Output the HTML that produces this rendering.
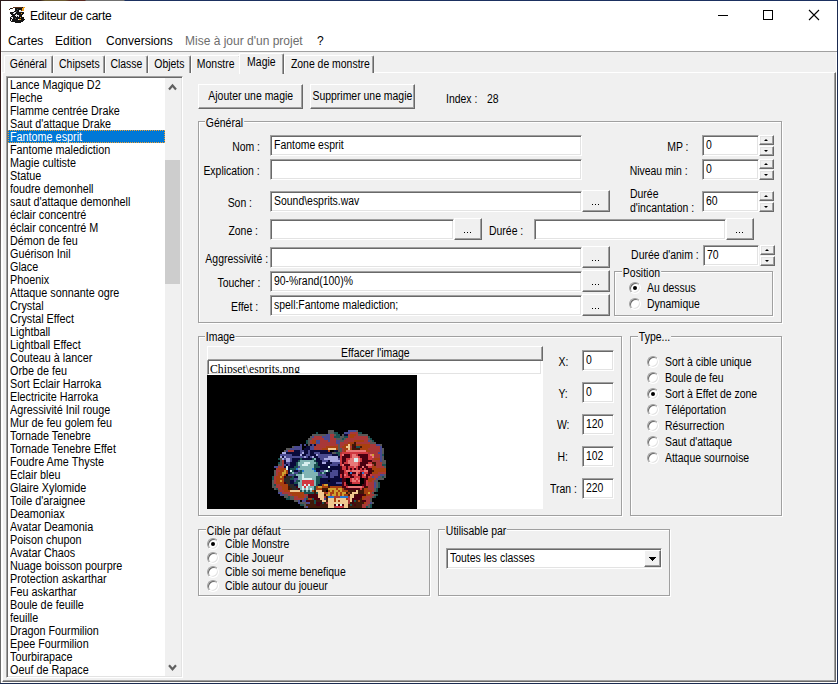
<!DOCTYPE html>
<html><head><meta charset="utf-8">
<style>
*{margin:0;padding:0;box-sizing:border-box}
html,body{width:838px;height:684px;overflow:hidden;background:#f0f0f0}
body{position:relative;font-family:"Liberation Sans",sans-serif;font-size:10.5px;line-height:13px;color:#000}
.a{position:absolute}
.t{position:absolute;white-space:nowrap;line-height:13px;font-size:12px;transform:scaleX(.87);transform-origin:0 0}
.tr{transform-origin:100% 0}
.sx{display:inline-block;font-size:12px;transform:scaleX(.87)}
.sl{display:inline-block;transform:scaleX(.9);transform-origin:0 0}
.r{text-align:right}
.ed{position:absolute;background:#fff;border:1px solid;border-color:#a0a0a0 #fff #fff #a0a0a0;box-shadow:inset 1px 1px #696969,inset -1px -1px #e3e3e3}
.btn{position:absolute;background:#f0f0f0;border:1px solid;border-color:#fff #696969 #696969 #fff;box-shadow:inset -1px -1px #a0a0a0;text-align:center;white-space:nowrap;overflow:hidden;display:flex;justify-content:center}
.grp{position:absolute;border:1px solid #a0a0a0;box-shadow:1px 1px #fff, inset 1px 1px #fff}
.gl{position:absolute;background:#f0f0f0;padding:0 1px;white-space:nowrap;line-height:13px;font-size:12px;transform:scaleX(.87);transform-origin:0 0}
.spin{position:absolute;width:15px;height:10px;background:#f0f0f0;border:1px solid;border-color:#fff #696969 #696969 #fff;box-shadow:inset -1px -1px #a0a0a0,inset 1px 1px #e3e3e3}
.spin:after{content:"";position:absolute;left:4px;border-left:2px solid transparent;border-right:2px solid transparent}
.up:after{top:3px;border-bottom:2px solid #000}
.dn:after{top:3px;border-top:2px solid #000}
.rad{position:absolute;width:12px;height:12px;border-radius:50%;background:#fff;border:1px solid;border-color:#a0a0a0 #fff #fff #a0a0a0;box-shadow:inset 1px 1px #696969,inset -1px -1px #e3e3e3}
.rad.on:after{content:"";position:absolute;left:3px;top:3px;width:4px;height:4px;border-radius:50%;background:#000}
.li{position:absolute;left:8px;width:157px;height:13px;font-size:12px;line-height:15px;padding-left:2px;white-space:nowrap}
.tab{position:absolute;top:55px;height:18px;background:#f0f0f0;border:1px solid;border-bottom:none;border-color:#fff #696969 #696969 #fff;box-shadow:inset -1px 0 #a0a0a0;border-radius:2px 2px 0 0;text-align:center;font-size:12px;line-height:17px;white-space:nowrap}
.tab.sel{top:53px;height:21px;z-index:2;line-height:17px}
.li.sel{background:#0078d7;color:#fff;outline:1px dotted #f0a030;outline-offset:-1px}
.dots i{position:absolute;top:13px;width:1px;height:1px;background:#000}
.dots i:nth-child(1){left:9px}.dots i:nth-child(2){left:12px}.dots i:nth-child(3){left:15px}
</style></head><body>

<!-- title bar -->
<div class="a" style="left:0;top:0;width:838px;height:51px;background:#fff"></div>
<div class="a" style="left:0;top:51px;width:837px;height:1px;background:#a0a0a0"></div>
<svg class="a" style="left:9px;top:7px" width="16" height="16" viewBox="0 0 16 16" shape-rendering="crispEdges"><rect x="4" y="0" width="1" height="1" fill="#5a3018"/><rect x="5" y="0" width="1" height="1" fill="#5a3018"/><rect x="6" y="0" width="1" height="1" fill="#5a3018"/><rect x="7" y="0" width="1" height="1" fill="#5a3018"/><rect x="8" y="0" width="1" height="1" fill="#5a3018"/><rect x="9" y="0" width="1" height="1" fill="#5a3018"/><rect x="10" y="0" width="1" height="1" fill="#5a3018"/><rect x="11" y="0" width="1" height="1" fill="#5a3018"/><rect x="12" y="0" width="1" height="1" fill="#5a3018"/><rect x="13" y="0" width="1" height="1" fill="#141414"/><rect x="14" y="0" width="1" height="1" fill="#f0a020"/><rect x="15" y="0" width="1" height="1" fill="#f0a020"/><rect x="1" y="1" width="1" height="1" fill="#141414"/><rect x="2" y="1" width="1" height="1" fill="#141414"/><rect x="3" y="1" width="1" height="1" fill="#5a3018"/><rect x="6" y="1" width="1" height="1" fill="#141414"/><rect x="7" y="1" width="1" height="1" fill="#141414"/><rect x="8" y="1" width="1" height="1" fill="#141414"/><rect x="9" y="1" width="1" height="1" fill="#141414"/><rect x="10" y="1" width="1" height="1" fill="#141414"/><rect x="11" y="1" width="1" height="1" fill="#141414"/><rect x="12" y="1" width="1" height="1" fill="#141414"/><rect x="13" y="1" width="1" height="1" fill="#f0a020"/><rect x="14" y="1" width="1" height="1" fill="#f0a020"/><rect x="0" y="2" width="1" height="1" fill="#5a3018"/><rect x="6" y="2" width="1" height="1" fill="#141414"/><rect x="7" y="2" width="1" height="1" fill="#141414"/><rect x="8" y="2" width="1" height="1" fill="#50585a"/><rect x="9" y="2" width="1" height="1" fill="#141414"/><rect x="10" y="2" width="1" height="1" fill="#141414"/><rect x="11" y="2" width="1" height="1" fill="#141414"/><rect x="12" y="2" width="1" height="1" fill="#141414"/><rect x="13" y="2" width="1" height="1" fill="#f0a020"/><rect x="14" y="2" width="1" height="1" fill="#f0a020"/><rect x="6" y="3" width="1" height="1" fill="#141414"/><rect x="7" y="3" width="1" height="1" fill="#141414"/><rect x="8" y="3" width="1" height="1" fill="#141414"/><rect x="9" y="3" width="1" height="1" fill="#141414"/><rect x="10" y="3" width="1" height="1" fill="#e8e8e8"/><rect x="11" y="3" width="1" height="1" fill="#e8e8e8"/><rect x="12" y="3" width="1" height="1" fill="#5a3018"/><rect x="13" y="3" width="1" height="1" fill="#f0a020"/><rect x="14" y="3" width="1" height="1" fill="#f0a020"/><rect x="5" y="4" width="1" height="1" fill="#141414"/><rect x="6" y="4" width="1" height="1" fill="#141414"/><rect x="7" y="4" width="1" height="1" fill="#50585a"/><rect x="8" y="4" width="1" height="1" fill="#141414"/><rect x="9" y="4" width="1" height="1" fill="#141414"/><rect x="10" y="4" width="1" height="1" fill="#e8e8e8"/><rect x="11" y="4" width="1" height="1" fill="#e8e8e8"/><rect x="12" y="4" width="1" height="1" fill="#e8e8e8"/><rect x="1" y="5" width="1" height="1" fill="#141414"/><rect x="2" y="5" width="1" height="1" fill="#141414"/><rect x="3" y="5" width="1" height="1" fill="#141414"/><rect x="4" y="5" width="1" height="1" fill="#141414"/><rect x="5" y="5" width="1" height="1" fill="#e8e8e8"/><rect x="6" y="5" width="1" height="1" fill="#e8e8e8"/><rect x="7" y="5" width="1" height="1" fill="#141414"/><rect x="8" y="5" width="1" height="1" fill="#141414"/><rect x="9" y="5" width="1" height="1" fill="#141414"/><rect x="10" y="5" width="1" height="1" fill="#141414"/><rect x="11" y="5" width="1" height="1" fill="#141414"/><rect x="12" y="5" width="1" height="1" fill="#141414"/><rect x="13" y="5" width="1" height="1" fill="#141414"/><rect x="14" y="5" width="1" height="1" fill="#141414"/><rect x="1" y="6" width="1" height="1" fill="#141414"/><rect x="2" y="6" width="1" height="1" fill="#141414"/><rect x="3" y="6" width="1" height="1" fill="#141414"/><rect x="4" y="6" width="1" height="1" fill="#e8e8e8"/><rect x="5" y="6" width="1" height="1" fill="#e8e8e8"/><rect x="6" y="6" width="1" height="1" fill="#141414"/><rect x="7" y="6" width="1" height="1" fill="#141414"/><rect x="8" y="6" width="1" height="1" fill="#141414"/><rect x="9" y="6" width="1" height="1" fill="#141414"/><rect x="10" y="6" width="1" height="1" fill="#141414"/><rect x="11" y="6" width="1" height="1" fill="#141414"/><rect x="12" y="6" width="1" height="1" fill="#f0a020"/><rect x="13" y="6" width="1" height="1" fill="#141414"/><rect x="14" y="6" width="1" height="1" fill="#141414"/><rect x="2" y="7" width="1" height="1" fill="#141414"/><rect x="3" y="7" width="1" height="1" fill="#141414"/><rect x="4" y="7" width="1" height="1" fill="#141414"/><rect x="5" y="7" width="1" height="1" fill="#141414"/><rect x="6" y="7" width="1" height="1" fill="#141414"/><rect x="7" y="7" width="1" height="1" fill="#e8e8e8"/><rect x="8" y="7" width="1" height="1" fill="#141414"/><rect x="9" y="7" width="1" height="1" fill="#141414"/><rect x="10" y="7" width="1" height="1" fill="#141414"/><rect x="11" y="7" width="1" height="1" fill="#141414"/><rect x="12" y="7" width="1" height="1" fill="#141414"/><rect x="13" y="7" width="1" height="1" fill="#141414"/><rect x="3" y="8" width="1" height="1" fill="#141414"/><rect x="4" y="8" width="1" height="1" fill="#141414"/><rect x="5" y="8" width="1" height="1" fill="#141414"/><rect x="6" y="8" width="1" height="1" fill="#e8e8e8"/><rect x="7" y="8" width="1" height="1" fill="#e8e8e8"/><rect x="8" y="8" width="1" height="1" fill="#e8e8e8"/><rect x="9" y="8" width="1" height="1" fill="#e8e8e8"/><rect x="10" y="8" width="1" height="1" fill="#141414"/><rect x="11" y="8" width="1" height="1" fill="#141414"/><rect x="12" y="8" width="1" height="1" fill="#141414"/><rect x="2" y="9" width="1" height="1" fill="#141414"/><rect x="3" y="9" width="1" height="1" fill="#141414"/><rect x="4" y="9" width="1" height="1" fill="#141414"/><rect x="5" y="9" width="1" height="1" fill="#141414"/><rect x="6" y="9" width="1" height="1" fill="#141414"/><rect x="7" y="9" width="1" height="1" fill="#e8e8e8"/><rect x="8" y="9" width="1" height="1" fill="#141414"/><rect x="9" y="9" width="1" height="1" fill="#e8e8e8"/><rect x="10" y="9" width="1" height="1" fill="#141414"/><rect x="11" y="9" width="1" height="1" fill="#141414"/><rect x="12" y="9" width="1" height="1" fill="#141414"/><rect x="1" y="10" width="1" height="1" fill="#141414"/><rect x="2" y="10" width="1" height="1" fill="#e8e8e8"/><rect x="3" y="10" width="1" height="1" fill="#e8e8e8"/><rect x="4" y="10" width="1" height="1" fill="#141414"/><rect x="5" y="10" width="1" height="1" fill="#141414"/><rect x="6" y="10" width="1" height="1" fill="#141414"/><rect x="7" y="10" width="1" height="1" fill="#141414"/><rect x="8" y="10" width="1" height="1" fill="#141414"/><rect x="9" y="10" width="1" height="1" fill="#141414"/><rect x="10" y="10" width="1" height="1" fill="#141414"/><rect x="11" y="10" width="1" height="1" fill="#f0a020"/><rect x="12" y="10" width="1" height="1" fill="#141414"/><rect x="13" y="10" width="1" height="1" fill="#141414"/><rect x="14" y="10" width="1" height="1" fill="#141414"/><rect x="1" y="11" width="1" height="1" fill="#141414"/><rect x="2" y="11" width="1" height="1" fill="#141414"/><rect x="3" y="11" width="1" height="1" fill="#e8e8e8"/><rect x="4" y="11" width="1" height="1" fill="#141414"/><rect x="5" y="11" width="1" height="1" fill="#141414"/><rect x="6" y="11" width="1" height="1" fill="#50585a"/><rect x="7" y="11" width="1" height="1" fill="#141414"/><rect x="8" y="11" width="1" height="1" fill="#141414"/><rect x="9" y="11" width="1" height="1" fill="#141414"/><rect x="10" y="11" width="1" height="1" fill="#141414"/><rect x="11" y="11" width="1" height="1" fill="#141414"/><rect x="12" y="11" width="1" height="1" fill="#141414"/><rect x="13" y="11" width="1" height="1" fill="#141414"/><rect x="14" y="11" width="1" height="1" fill="#141414"/><rect x="1" y="12" width="1" height="1" fill="#141414"/><rect x="2" y="12" width="1" height="1" fill="#e8e8e8"/><rect x="3" y="12" width="1" height="1" fill="#141414"/><rect x="4" y="12" width="1" height="1" fill="#141414"/><rect x="5" y="12" width="1" height="1" fill="#141414"/><rect x="6" y="12" width="1" height="1" fill="#141414"/><rect x="7" y="12" width="1" height="1" fill="#141414"/><rect x="8" y="12" width="1" height="1" fill="#141414"/><rect x="9" y="12" width="1" height="1" fill="#e8e8e8"/><rect x="10" y="12" width="1" height="1" fill="#f0a020"/><rect x="11" y="12" width="1" height="1" fill="#f0a020"/><rect x="12" y="12" width="1" height="1" fill="#141414"/><rect x="13" y="12" width="1" height="1" fill="#141414"/><rect x="14" y="12" width="1" height="1" fill="#141414"/><rect x="15" y="12" width="1" height="1" fill="#141414"/><rect x="1" y="13" width="1" height="1" fill="#141414"/><rect x="2" y="13" width="1" height="1" fill="#e8e8e8"/><rect x="3" y="13" width="1" height="1" fill="#141414"/><rect x="4" y="13" width="1" height="1" fill="#141414"/><rect x="5" y="13" width="1" height="1" fill="#141414"/><rect x="6" y="13" width="1" height="1" fill="#141414"/><rect x="7" y="13" width="1" height="1" fill="#141414"/><rect x="8" y="13" width="1" height="1" fill="#141414"/><rect x="9" y="13" width="1" height="1" fill="#141414"/><rect x="10" y="13" width="1" height="1" fill="#141414"/><rect x="11" y="13" width="1" height="1" fill="#141414"/><rect x="12" y="13" width="1" height="1" fill="#141414"/><rect x="13" y="13" width="1" height="1" fill="#141414"/><rect x="14" y="13" width="1" height="1" fill="#141414"/><rect x="2" y="14" width="1" height="1" fill="#141414"/><rect x="3" y="14" width="1" height="1" fill="#141414"/><rect x="4" y="14" width="1" height="1" fill="#141414"/><rect x="5" y="14" width="1" height="1" fill="#141414"/><rect x="6" y="14" width="1" height="1" fill="#141414"/><rect x="7" y="14" width="1" height="1" fill="#141414"/><rect x="8" y="14" width="1" height="1" fill="#141414"/><rect x="9" y="14" width="1" height="1" fill="#141414"/><rect x="10" y="14" width="1" height="1" fill="#141414"/><rect x="11" y="14" width="1" height="1" fill="#141414"/><rect x="12" y="14" width="1" height="1" fill="#141414"/><rect x="13" y="14" width="1" height="1" fill="#141414"/><rect x="6" y="15" width="1" height="1" fill="#141414"/><rect x="7" y="15" width="1" height="1" fill="#141414"/><rect x="8" y="15" width="1" height="1" fill="#141414"/><rect x="9" y="15" width="1" height="1" fill="#141414"/><rect x="10" y="15" width="1" height="1" fill="#141414"/><rect x="11" y="15" width="1" height="1" fill="#141414"/></svg>
<div class="t" style="transform:none;left:30px;top:6px;font-size:12px;line-height:20px;letter-spacing:-0.2px;color:#000">Editeur de carte</div>
<div class="a" style="left:718px;top:15px;width:10px;height:1px;background:#000"></div>
<div class="a" style="left:763px;top:10px;width:10px;height:10px;border:1px solid #000"></div>
<svg class="a" style="left:808px;top:9px" width="12" height="12" viewBox="0 0 12 12"><path d="M1 1L11 11M11 1L1 11" stroke="#000" stroke-width="1.1"/></svg>
<!-- menu -->
<div class="t" style="transform:none;left:8px;top:34px;font-size:12px;line-height:14px">Cartes</div>
<div class="t" style="transform:none;left:55px;top:34px;font-size:12px;line-height:14px">Edition</div>
<div class="t" style="transform:none;left:106px;top:34px;font-size:12px;line-height:14px">Conversions</div>
<div class="t" style="transform:none;left:185px;top:34px;font-size:12px;line-height:14px;color:#6d6d6d">Mise à jour d'un projet</div>
<div class="t" style="transform:none;left:317px;top:34px;font-size:12px;line-height:14px">?</div>
<!-- tab control page -->
<div class="a" style="left:2px;top:72px;width:834px;height:610px;border:1px solid;border-color:#fff #696969 #696969 #fff;box-shadow:inset -1px -1px #a0a0a0"></div>
<div class="a" style="left:1px;top:52px;width:1px;height:631px;background:#fff"></div><div class="a" style="left:836px;top:52px;width:1px;height:631px;background:#fff"></div><div class="a" style="left:1px;top:682px;width:836px;height:1px;background:#fff"></div>
<!-- tabs -->
<div class="a tab" style="left:4px;width:49px"><span class="sx">Général</span></div>
<div class="a tab" style="left:53px;width:52px"><span class="sx">Chipsets</span></div>
<div class="a tab" style="left:105px;width:43px"><span class="sx">Classe</span></div>
<div class="a tab" style="left:148px;width:43px"><span class="sx">Objets</span></div>
<div class="a tab" style="left:191px;width:50px"><span class="sx">Monstre</span></div>
<div class="a tab sel" style="left:239px;width:45px"><span class="sx">Magie</span></div>
<div class="a tab" style="left:284px;width:90px"><span class="sx">Zone de monstre</span></div>
<!-- listbox -->
<div class="ed" style="left:6px;top:76px;width:177px;height:602px"></div>
<div class="li" style="top:78px"><span class="sl">Lance Magique D2</span></div>
<div class="li" style="top:91px"><span class="sl">Fleche</span></div>
<div class="li" style="top:104px"><span class="sl">Flamme centrée Drake</span></div>
<div class="li" style="top:117px"><span class="sl">Saut d'attaque Drake</span></div>
<div class="li sel" style="top:130px"><span class="sl">Fantome esprit</span></div>
<div class="li" style="top:143px"><span class="sl">Fantome malediction</span></div>
<div class="li" style="top:156px"><span class="sl">Magie cultiste</span></div>
<div class="li" style="top:169px"><span class="sl">Statue</span></div>
<div class="li" style="top:182px"><span class="sl">foudre demonhell</span></div>
<div class="li" style="top:195px"><span class="sl">saut d'attaque demonhell</span></div>
<div class="li" style="top:208px"><span class="sl">éclair concentré</span></div>
<div class="li" style="top:221px"><span class="sl">éclair concentré M</span></div>
<div class="li" style="top:234px"><span class="sl">Démon de feu</span></div>
<div class="li" style="top:247px"><span class="sl">Guérison Inil</span></div>
<div class="li" style="top:260px"><span class="sl">Glace</span></div>
<div class="li" style="top:273px"><span class="sl">Phoenix</span></div>
<div class="li" style="top:286px"><span class="sl">Attaque sonnante ogre</span></div>
<div class="li" style="top:299px"><span class="sl">Crystal</span></div>
<div class="li" style="top:312px"><span class="sl">Crystal Effect</span></div>
<div class="li" style="top:325px"><span class="sl">Lightball</span></div>
<div class="li" style="top:338px"><span class="sl">Lightball Effect</span></div>
<div class="li" style="top:351px"><span class="sl">Couteau à lancer</span></div>
<div class="li" style="top:364px"><span class="sl">Orbe de feu</span></div>
<div class="li" style="top:377px"><span class="sl">Sort Eclair Harroka</span></div>
<div class="li" style="top:390px"><span class="sl">Electricite Harroka</span></div>
<div class="li" style="top:403px"><span class="sl">Agressivité Inil rouge</span></div>
<div class="li" style="top:416px"><span class="sl">Mur de feu golem feu</span></div>
<div class="li" style="top:429px"><span class="sl">Tornade Tenebre</span></div>
<div class="li" style="top:442px"><span class="sl">Tornade Tenebre Effet</span></div>
<div class="li" style="top:455px"><span class="sl">Foudre Ame Thyste</span></div>
<div class="li" style="top:468px"><span class="sl">Eclair bleu</span></div>
<div class="li" style="top:481px"><span class="sl">Glaire Xylomide</span></div>
<div class="li" style="top:494px"><span class="sl">Toile d'araignee</span></div>
<div class="li" style="top:507px"><span class="sl">Deamoniax</span></div>
<div class="li" style="top:520px"><span class="sl">Avatar Deamonia</span></div>
<div class="li" style="top:533px"><span class="sl">Poison chupon</span></div>
<div class="li" style="top:546px"><span class="sl">Avatar Chaos</span></div>
<div class="li" style="top:559px"><span class="sl">Nuage boisson pourpre</span></div>
<div class="li" style="top:572px"><span class="sl">Protection askarthar</span></div>
<div class="li" style="top:585px"><span class="sl">Feu askarthar</span></div>
<div class="li" style="top:598px"><span class="sl">Boule de feuille</span></div>
<div class="li" style="top:611px"><span class="sl">feuille</span></div>
<div class="li" style="top:624px"><span class="sl">Dragon Fourmilion</span></div>
<div class="li" style="top:637px"><span class="sl">Epee Fourmilion</span></div>
<div class="li" style="top:650px"><span class="sl">Tourbirapace</span></div>
<div class="li" style="top:663px"><span class="sl">Oeuf de Rapace</span></div>
<div class="a" style="left:165px;top:78px;width:16px;height:598px;background:#f0f0f0"></div>
<div class="a" style="left:165px;top:160px;width:15px;height:124px;background:#cdcdcd"></div>
<svg class="a" style="left:165px;top:78px" width="16" height="17" viewBox="0 0 16 17"><path d="M4 11.5 L7.5 7.5 L11 11.5" fill="none" stroke="#606060" stroke-width="2.2"/></svg>
<svg class="a" style="left:165px;top:659px" width="16" height="17" viewBox="0 0 16 17"><path d="M4 6.3 L7.5 10.3 L11 6.3" fill="none" stroke="#606060" stroke-width="2.2"/></svg>
<!--MAIN-->
<div class="btn" style="left:198px;top:84px;width:105px;height:25px;line-height:23px"><span class="sx">Ajouter une magie</span></div>
<div class="btn" style="left:310px;top:84px;width:105px;height:25px;line-height:23px"><span class="sx">Supprimer une magie</span></div>
<div class="t" style="left:446px;top:93px">Index :</div>
<div class="t" style="left:487px;top:93px">28</div>
<div class="grp" style="left:198px;top:121px;width:584px;height:202px"></div><div class="gl" style="left:205px;top:117px">Général</div>
<div class="t tr" style="right:578px;top:141px">Nom :</div>
<div class="ed" style="left:270px;top:135px;width:312px;height:21px"></div><div class="t" style="left:274px;top:139px">Fantome esprit</div>
<div class="t tr" style="right:578px;top:165px">Explication :</div>
<div class="ed" style="left:270px;top:159px;width:312px;height:21px"></div>
<div class="t tr" style="right:586px;top:197px">Son :</div>
<div class="ed" style="left:270px;top:191px;width:312px;height:21px"></div><div class="t" style="left:274px;top:195px">Sound\esprits.wav</div>
<div class="btn dots" style="left:582px;top:190px;width:28px;height:22px"><i></i><i></i><i></i></div>
<div class="t tr" style="right:580px;top:225px">Zone :</div>
<div class="ed" style="left:270px;top:219px;width:184px;height:21px"></div>
<div class="btn dots" style="left:454px;top:218px;width:28px;height:22px"><i></i><i></i><i></i></div>
<div class="t" style="left:489px;top:225px">Durée :</div>
<div class="ed" style="left:534px;top:219px;width:192px;height:21px"></div>
<div class="btn dots" style="left:726px;top:218px;width:28px;height:22px"><i></i><i></i><i></i></div>
<div class="t tr" style="right:570px;top:253px">Aggressivité :</div>
<div class="ed" style="left:270px;top:247px;width:312px;height:21px"></div>
<div class="btn dots" style="left:582px;top:246px;width:28px;height:22px"><i></i><i></i><i></i></div>
<div class="t tr" style="right:578px;top:277px">Toucher :</div>
<div class="ed" style="left:270px;top:271px;width:312px;height:21px"></div><div class="t" style="left:274px;top:275px">90-%rand(100)%</div>
<div class="btn dots" style="left:582px;top:270px;width:28px;height:22px"><i></i><i></i><i></i></div>
<div class="t tr" style="right:580px;top:301px">Effet :</div>
<div class="ed" style="left:270px;top:295px;width:312px;height:21px"></div><div class="t" style="left:274px;top:299px">spell:Fantome malediction;</div>
<div class="btn dots" style="left:582px;top:294px;width:28px;height:22px"><i></i><i></i><i></i></div>
<div class="t tr" style="right:150px;top:141px">MP :</div>
<div class="ed" style="left:702px;top:135px;width:57px;height:21px"></div><div class="t" style="left:706px;top:139px">0</div>
<div class="spin up" style="left:759px;top:135px"></div><div class="spin dn" style="left:759px;top:146px"></div>
<div class="t tr" style="right:150px;top:165px">Niveau min :</div>
<div class="ed" style="left:702px;top:159px;width:57px;height:21px"></div><div class="t" style="left:706px;top:163px">0</div>
<div class="spin up" style="left:759px;top:159px"></div><div class="spin dn" style="left:759px;top:170px"></div>
<div class="t" style="left:630px;top:188px">Durée</div>
<div class="t" style="left:630px;top:202px">d'incantation :</div>
<div class="ed" style="left:702px;top:191px;width:57px;height:21px"></div><div class="t" style="left:706px;top:195px">60</div>
<div class="spin up" style="left:759px;top:191px"></div><div class="spin dn" style="left:759px;top:202px"></div>
<div class="t tr" style="right:139px;top:249px">Durée d'anim :</div>
<div class="ed" style="left:703px;top:245px;width:56px;height:21px"></div><div class="t" style="left:707px;top:249px">70</div>
<div class="spin up" style="left:760px;top:245px"></div><div class="spin dn" style="left:760px;top:256px"></div>
<div class="grp" style="left:614px;top:271px;width:159px;height:45px"></div><div class="gl" style="left:622px;top:267px">Position</div>
<div class="rad on" style="left:629px;top:282px"></div><div class="t" style="left:647px;top:282px">Au dessus</div>
<div class="rad" style="left:629px;top:298px"></div><div class="t" style="left:647px;top:298px">Dynamique</div>
<div class="grp" style="left:198px;top:336px;width:424px;height:180px"></div><div class="gl" style="left:205px;top:331px">Image</div>
<div class="a" style="left:207px;top:360px;width:336px;height:149px;background:#fff"></div>
<div class="ed" style="left:207px;top:359px;width:335px;height:16px"></div>
<div class="a" style="left:209px;top:361px;width:332px;height:12px;overflow:hidden"><div class="t" style="left:1px;top:1px;font-family:'Liberation Serif',serif;font-size:13px;line-height:14px;transform:scaleX(.9)">Chipset\esprits.png</div></div>
<div class="btn" style="left:207px;top:346px;width:336px;height:15px;line-height:13px"><span class="sx">Effacer l'image</span></div>
<div class="a" id="pic" style="left:207px;top:375px;width:210px;height:134px;background:#000;overflow:hidden"><svg width="210" height="134" viewBox="207 375 210 134" style="position:absolute;left:0;top:0" shape-rendering="crispEdges"><rect x="316" y="432" width="2" height="2" fill="#1a5050"/><rect x="312" y="434" width="14" height="2" fill="#585858"/><rect x="326" y="434" width="2" height="2" fill="#4a4a90"/><rect x="310" y="436" width="2" height="2" fill="#585858"/><rect x="312" y="436" width="2" height="2" fill="#4a4a90"/><rect x="314" y="436" width="8" height="2" fill="#a83838"/><rect x="322" y="436" width="6" height="2" fill="#4a4a90"/><rect x="308" y="438" width="4" height="2" fill="#585858"/><rect x="312" y="438" width="12" height="2" fill="#a83838"/><rect x="324" y="438" width="4" height="2" fill="#4a4a90"/><rect x="306" y="440" width="2" height="2" fill="#1a5050"/><rect x="308" y="440" width="2" height="2" fill="#585858"/><rect x="310" y="440" width="2" height="2" fill="#a83838"/><rect x="312" y="440" width="4" height="2" fill="#a84010"/><rect x="316" y="440" width="4" height="2" fill="#4a4a90"/><rect x="320" y="440" width="8" height="2" fill="#a83838"/><rect x="306" y="442" width="2" height="2" fill="#1a5050"/><rect x="308" y="442" width="2" height="2" fill="#585858"/><rect x="310" y="442" width="2" height="2" fill="#a83838"/><rect x="312" y="442" width="4" height="2" fill="#a84010"/><rect x="316" y="442" width="4" height="2" fill="#4a4a90"/><rect x="320" y="442" width="8" height="2" fill="#a83838"/><rect x="300" y="444" width="2" height="2" fill="#4a4a90"/><rect x="304" y="444" width="2" height="2" fill="#4a4a90"/><rect x="308" y="444" width="2" height="2" fill="#585858"/><rect x="310" y="444" width="2" height="2" fill="#0a0a3a"/><rect x="312" y="444" width="2" height="2" fill="#4a4a90"/><rect x="314" y="444" width="2" height="2" fill="#0a0a3a"/><rect x="316" y="444" width="12" height="2" fill="#a83838"/><rect x="292" y="446" width="2" height="2" fill="#585858"/><rect x="294" y="446" width="8" height="2" fill="#4a4a90"/><rect x="306" y="446" width="4" height="2" fill="#0a0a3a"/><rect x="310" y="446" width="4" height="2" fill="#4a4a90"/><rect x="314" y="446" width="12" height="2" fill="#a83838"/><rect x="326" y="446" width="2" height="2" fill="#a84010"/><rect x="286" y="448" width="4" height="2" fill="#585858"/><rect x="290" y="448" width="12" height="2" fill="#4a4a90"/><rect x="304" y="448" width="6" height="2" fill="#0a0a3a"/><rect x="310" y="448" width="4" height="2" fill="#4a4a90"/><rect x="314" y="448" width="8" height="2" fill="#a83838"/><rect x="322" y="448" width="6" height="2" fill="#a84010"/><rect x="284" y="450" width="2" height="2" fill="#585858"/><rect x="286" y="450" width="2" height="2" fill="#4a4a90"/><rect x="288" y="450" width="6" height="2" fill="#a83838"/><rect x="294" y="450" width="6" height="2" fill="#0a0a3a"/><rect x="300" y="450" width="4" height="2" fill="#4a4a90"/><rect x="304" y="450" width="4" height="2" fill="#0a0a3a"/><rect x="308" y="450" width="2" height="2" fill="#4a4a90"/><rect x="310" y="450" width="18" height="2" fill="#0a0a3a"/><rect x="282" y="452" width="4" height="2" fill="#a8a8e0"/><rect x="286" y="452" width="14" height="2" fill="#0a0a3a"/><rect x="300" y="452" width="2" height="2" fill="#4a4a90"/><rect x="302" y="452" width="2" height="2" fill="#a8a8e0"/><rect x="304" y="452" width="4" height="2" fill="#0a0a3a"/><rect x="308" y="452" width="2" height="2" fill="#4a4a90"/><rect x="310" y="452" width="4" height="2" fill="#0a0a3a"/><rect x="314" y="452" width="6" height="2" fill="#4a4a90"/><rect x="320" y="452" width="8" height="2" fill="#0a0a3a"/><rect x="280" y="454" width="12" height="2" fill="#4a4a90"/><rect x="292" y="454" width="8" height="2" fill="#0a0a3a"/><rect x="300" y="454" width="2" height="2" fill="#a8a8e0"/><rect x="302" y="454" width="4" height="2" fill="#0a0a3a"/><rect x="306" y="454" width="4" height="2" fill="#4a4a90"/><rect x="310" y="454" width="6" height="2" fill="#0a0a3a"/><rect x="316" y="454" width="2" height="2" fill="#a8a8e0"/><rect x="318" y="454" width="10" height="2" fill="#4a4a90"/><rect x="280" y="456" width="2" height="2" fill="#a8a8e0"/><rect x="282" y="456" width="2" height="2" fill="#0a0a3a"/><rect x="284" y="456" width="2" height="2" fill="#a8a8e0"/><rect x="286" y="456" width="18" height="2" fill="#4a4a90"/><rect x="304" y="456" width="2" height="2" fill="#a8a8e0"/><rect x="306" y="456" width="2" height="2" fill="#4a4a90"/><rect x="308" y="456" width="2" height="2" fill="#0a0a3a"/><rect x="310" y="456" width="2" height="2" fill="#4a4a90"/><rect x="312" y="456" width="2" height="2" fill="#a8a8e0"/><rect x="314" y="456" width="4" height="2" fill="#0a0a3a"/><rect x="318" y="456" width="10" height="2" fill="#4a4a90"/><rect x="278" y="458" width="2" height="2" fill="#1a5050"/><rect x="280" y="458" width="2" height="2" fill="#585858"/><rect x="282" y="458" width="2" height="2" fill="#a8a8e0"/><rect x="284" y="458" width="2" height="2" fill="#4a4a90"/><rect x="286" y="458" width="4" height="2" fill="#a8a8e0"/><rect x="290" y="458" width="2" height="2" fill="#4a4a90"/><rect x="292" y="458" width="8" height="2" fill="#0a0a3a"/><rect x="300" y="458" width="2" height="2" fill="#1a5050"/><rect x="302" y="458" width="10" height="2" fill="#0a0a3a"/><rect x="312" y="458" width="2" height="2" fill="#1a5050"/><rect x="314" y="458" width="2" height="2" fill="#80b4b4"/><rect x="316" y="458" width="4" height="2" fill="#0a0a3a"/><rect x="320" y="458" width="4" height="2" fill="#4a4a90"/><rect x="324" y="458" width="4" height="2" fill="#a8a8e0"/><rect x="280" y="460" width="2" height="2" fill="#585858"/><rect x="282" y="460" width="2" height="2" fill="#a83838"/><rect x="284" y="460" width="2" height="2" fill="#0a0a3a"/><rect x="286" y="460" width="4" height="2" fill="#a8a8e0"/><rect x="290" y="460" width="2" height="2" fill="#4a4a90"/><rect x="292" y="460" width="6" height="2" fill="#0a0a3a"/><rect x="298" y="460" width="2" height="2" fill="#1a5050"/><rect x="300" y="460" width="14" height="2" fill="#80b4b4"/><rect x="314" y="460" width="2" height="2" fill="#1a5050"/><rect x="316" y="460" width="6" height="2" fill="#0a0a3a"/><rect x="322" y="460" width="6" height="2" fill="#4a4a90"/><rect x="278" y="462" width="2" height="2" fill="#1a5050"/><rect x="280" y="462" width="2" height="2" fill="#585858"/><rect x="282" y="462" width="2" height="2" fill="#a83838"/><rect x="284" y="462" width="2" height="2" fill="#0a0a3a"/><rect x="286" y="462" width="4" height="2" fill="#4a4a90"/><rect x="290" y="462" width="6" height="2" fill="#0a0a3a"/><rect x="296" y="462" width="2" height="2" fill="#1a5050"/><rect x="298" y="462" width="6" height="2" fill="#80b4b4"/><rect x="304" y="462" width="6" height="2" fill="#d8f0f0"/><rect x="310" y="462" width="6" height="2" fill="#80b4b4"/><rect x="316" y="462" width="2" height="2" fill="#1a5050"/><rect x="318" y="462" width="4" height="2" fill="#0a0a3a"/><rect x="322" y="462" width="4" height="2" fill="#a8a8e0"/><rect x="326" y="462" width="2" height="2" fill="#0a0a3a"/><rect x="278" y="464" width="4" height="2" fill="#585858"/><rect x="282" y="464" width="2" height="2" fill="#a83838"/><rect x="284" y="464" width="2" height="2" fill="#4a4a90"/><rect x="286" y="464" width="2" height="2" fill="#0a0a3a"/><rect x="288" y="464" width="2" height="2" fill="#4a4a90"/><rect x="290" y="464" width="6" height="2" fill="#0a0a3a"/><rect x="296" y="464" width="2" height="2" fill="#1a5050"/><rect x="298" y="464" width="4" height="2" fill="#80b4b4"/><rect x="302" y="464" width="6" height="2" fill="#d8f0f0"/><rect x="308" y="464" width="6" height="2" fill="#80b4b4"/><rect x="314" y="464" width="4" height="2" fill="#1a5050"/><rect x="318" y="464" width="10" height="2" fill="#0a0a3a"/><rect x="274" y="466" width="4" height="2" fill="#4a4a90"/><rect x="278" y="466" width="6" height="2" fill="#a83838"/><rect x="284" y="466" width="2" height="2" fill="#0a0a3a"/><rect x="286" y="466" width="2" height="2" fill="#d8f0f0"/><rect x="288" y="466" width="6" height="2" fill="#0a0a3a"/><rect x="294" y="466" width="4" height="2" fill="#1a5050"/><rect x="298" y="466" width="2" height="2" fill="#4a4a90"/><rect x="300" y="466" width="14" height="2" fill="#80b4b4"/><rect x="314" y="466" width="6" height="2" fill="#1a5050"/><rect x="320" y="466" width="8" height="2" fill="#0a0a3a"/><rect x="276" y="468" width="2" height="2" fill="#a83838"/><rect x="278" y="468" width="8" height="2" fill="#a84010"/><rect x="286" y="468" width="2" height="2" fill="#d8f0f0"/><rect x="288" y="468" width="2" height="2" fill="#0a0a3a"/><rect x="290" y="468" width="6" height="2" fill="#1a5050"/><rect x="296" y="468" width="2" height="2" fill="#2878d0"/><rect x="298" y="468" width="14" height="2" fill="#80b4b4"/><rect x="312" y="468" width="2" height="2" fill="#2878d0"/><rect x="314" y="468" width="2" height="2" fill="#1a5050"/><rect x="316" y="468" width="12" height="2" fill="#0a0a3a"/><rect x="328" y="430" width="6" height="2" fill="#585858"/><rect x="348" y="430" width="8" height="2" fill="#4a4a90"/><rect x="356" y="430" width="2" height="2" fill="#585858"/><rect x="328" y="432" width="6" height="2" fill="#585858"/><rect x="334" y="432" width="4" height="2" fill="#1a5050"/><rect x="344" y="432" width="6" height="2" fill="#4a4a90"/><rect x="350" y="432" width="8" height="2" fill="#a83838"/><rect x="358" y="432" width="4" height="2" fill="#1a5050"/><rect x="328" y="434" width="2" height="2" fill="#4a4a90"/><rect x="330" y="434" width="4" height="2" fill="#a83838"/><rect x="334" y="434" width="2" height="2" fill="#585858"/><rect x="336" y="434" width="4" height="2" fill="#1a5050"/><rect x="342" y="434" width="2" height="2" fill="#585858"/><rect x="344" y="434" width="4" height="2" fill="#0a0a3a"/><rect x="348" y="434" width="2" height="2" fill="#a83838"/><rect x="350" y="434" width="6" height="2" fill="#a84010"/><rect x="356" y="434" width="2" height="2" fill="#a83838"/><rect x="358" y="434" width="10" height="2" fill="#585858"/><rect x="328" y="436" width="2" height="2" fill="#4a4a90"/><rect x="330" y="436" width="4" height="2" fill="#a83838"/><rect x="334" y="436" width="6" height="2" fill="#1a5050"/><rect x="340" y="436" width="4" height="2" fill="#585858"/><rect x="344" y="436" width="4" height="2" fill="#1a5050"/><rect x="348" y="436" width="2" height="2" fill="#a83838"/><rect x="350" y="436" width="4" height="2" fill="#a84010"/><rect x="354" y="436" width="14" height="2" fill="#a83838"/><rect x="368" y="436" width="2" height="2" fill="#1a5050"/><rect x="328" y="438" width="2" height="2" fill="#4a4a90"/><rect x="330" y="438" width="6" height="2" fill="#a83838"/><rect x="336" y="438" width="6" height="2" fill="#585858"/><rect x="342" y="438" width="2" height="2" fill="#1a5050"/><rect x="344" y="438" width="2" height="2" fill="#585858"/><rect x="346" y="438" width="22" height="2" fill="#a83838"/><rect x="368" y="438" width="2" height="2" fill="#585858"/><rect x="370" y="438" width="2" height="2" fill="#1a5050"/><rect x="328" y="440" width="2" height="2" fill="#4a4a90"/><rect x="330" y="440" width="6" height="2" fill="#a83838"/><rect x="336" y="440" width="4" height="2" fill="#4a4a90"/><rect x="340" y="440" width="4" height="2" fill="#585858"/><rect x="344" y="440" width="10" height="2" fill="#a83838"/><rect x="354" y="440" width="10" height="2" fill="#a84010"/><rect x="364" y="440" width="4" height="2" fill="#a83838"/><rect x="368" y="440" width="2" height="2" fill="#4a4a90"/><rect x="370" y="440" width="2" height="2" fill="#585858"/><rect x="372" y="440" width="2" height="2" fill="#1a5050"/><rect x="328" y="442" width="8" height="2" fill="#a83838"/><rect x="336" y="442" width="4" height="2" fill="#4a4a90"/><rect x="340" y="442" width="8" height="2" fill="#a83838"/><rect x="348" y="442" width="6" height="2" fill="#a84010"/><rect x="354" y="442" width="2" height="2" fill="#401808"/><rect x="356" y="442" width="14" height="2" fill="#a83838"/><rect x="370" y="442" width="6" height="2" fill="#585858"/><rect x="328" y="444" width="10" height="2" fill="#a83838"/><rect x="338" y="444" width="2" height="2" fill="#585858"/><rect x="340" y="444" width="4" height="2" fill="#a83838"/><rect x="344" y="444" width="4" height="2" fill="#a84010"/><rect x="348" y="444" width="2" height="2" fill="#f0c890"/><rect x="350" y="444" width="2" height="2" fill="#a84010"/><rect x="352" y="444" width="4" height="2" fill="#401808"/><rect x="356" y="444" width="14" height="2" fill="#a84010"/><rect x="370" y="444" width="6" height="2" fill="#a83838"/><rect x="376" y="444" width="4" height="2" fill="#4a4a90"/><rect x="380" y="444" width="2" height="2" fill="#585858"/><rect x="328" y="446" width="10" height="2" fill="#a84010"/><rect x="338" y="446" width="2" height="2" fill="#585858"/><rect x="340" y="446" width="2" height="2" fill="#a83838"/><rect x="342" y="446" width="4" height="2" fill="#a84010"/><rect x="346" y="446" width="4" height="2" fill="#f0c890"/><rect x="350" y="446" width="2" height="2" fill="#a83838"/><rect x="352" y="446" width="2" height="2" fill="#401808"/><rect x="354" y="446" width="2" height="2" fill="#480010"/><rect x="356" y="446" width="4" height="2" fill="#1a5050"/><rect x="360" y="446" width="2" height="2" fill="#401808"/><rect x="362" y="446" width="8" height="2" fill="#a84010"/><rect x="370" y="446" width="10" height="2" fill="#a83838"/><rect x="380" y="446" width="2" height="2" fill="#4a4a90"/><rect x="328" y="448" width="8" height="2" fill="#f0c890"/><rect x="336" y="448" width="2" height="2" fill="#a84010"/><rect x="338" y="448" width="4" height="2" fill="#585858"/><rect x="342" y="448" width="2" height="2" fill="#a83838"/><rect x="344" y="448" width="4" height="2" fill="#a84010"/><rect x="348" y="448" width="2" height="2" fill="#f0c890"/><rect x="350" y="448" width="2" height="2" fill="#a84010"/><rect x="352" y="448" width="8" height="2" fill="#401808"/><rect x="360" y="448" width="8" height="2" fill="#a84010"/><rect x="368" y="448" width="12" height="2" fill="#a83838"/><rect x="380" y="448" width="2" height="2" fill="#4a4a90"/><rect x="382" y="448" width="2" height="2" fill="#585858"/><rect x="328" y="450" width="2" height="2" fill="#a84010"/><rect x="334" y="450" width="4" height="2" fill="#0a0a3a"/><rect x="338" y="450" width="4" height="2" fill="#585858"/><rect x="342" y="450" width="2" height="2" fill="#a83838"/><rect x="344" y="450" width="2" height="2" fill="#a84010"/><rect x="346" y="450" width="20" height="2" fill="#e87878"/><rect x="366" y="450" width="4" height="2" fill="#a84010"/><rect x="370" y="450" width="10" height="2" fill="#a83838"/><rect x="380" y="450" width="2" height="2" fill="#4a4a90"/><rect x="382" y="450" width="2" height="2" fill="#585858"/><rect x="328" y="452" width="4" height="2" fill="#0a0a3a"/><rect x="332" y="452" width="4" height="2" fill="#585858"/><rect x="336" y="452" width="4" height="2" fill="#1a5050"/><rect x="340" y="452" width="2" height="2" fill="#a83838"/><rect x="342" y="452" width="26" height="2" fill="#d03840"/><rect x="368" y="452" width="10" height="2" fill="#a83838"/><rect x="378" y="452" width="4" height="2" fill="#4a4a90"/><rect x="382" y="452" width="2" height="2" fill="#585858"/><rect x="328" y="454" width="4" height="2" fill="#4a4a90"/><rect x="332" y="454" width="6" height="2" fill="#0a0a3a"/><rect x="338" y="454" width="2" height="2" fill="#1a5050"/><rect x="340" y="454" width="2" height="2" fill="#d03840"/><rect x="342" y="454" width="2" height="2" fill="#e87878"/><rect x="344" y="454" width="6" height="2" fill="#480010"/><rect x="350" y="454" width="2" height="2" fill="#d03840"/><rect x="352" y="454" width="4" height="2" fill="#e87878"/><rect x="356" y="454" width="2" height="2" fill="#d03840"/><rect x="358" y="454" width="10" height="2" fill="#480010"/><rect x="368" y="454" width="2" height="2" fill="#d03840"/><rect x="370" y="454" width="2" height="2" fill="#e87878"/><rect x="372" y="454" width="2" height="2" fill="#d0a030"/><rect x="374" y="454" width="6" height="2" fill="#a83838"/><rect x="380" y="454" width="2" height="2" fill="#4a4a90"/><rect x="382" y="454" width="2" height="2" fill="#1a5050"/><rect x="328" y="456" width="10" height="2" fill="#a8a8e0"/><rect x="338" y="456" width="2" height="2" fill="#0a0a3a"/><rect x="340" y="456" width="2" height="2" fill="#d03840"/><rect x="342" y="456" width="8" height="2" fill="#480010"/><rect x="350" y="456" width="2" height="2" fill="#d03840"/><rect x="352" y="456" width="6" height="2" fill="#e87878"/><rect x="358" y="456" width="2" height="2" fill="#d03840"/><rect x="360" y="456" width="8" height="2" fill="#480010"/><rect x="368" y="456" width="4" height="2" fill="#d03840"/><rect x="372" y="456" width="2" height="2" fill="#e87878"/><rect x="374" y="456" width="6" height="2" fill="#a83838"/><rect x="380" y="456" width="2" height="2" fill="#4a4a90"/><rect x="382" y="456" width="2" height="2" fill="#585858"/><rect x="328" y="458" width="10" height="2" fill="#a8a8e0"/><rect x="338" y="458" width="2" height="2" fill="#4a4a90"/><rect x="340" y="458" width="2" height="2" fill="#d03840"/><rect x="342" y="458" width="4" height="2" fill="#480010"/><rect x="346" y="458" width="4" height="2" fill="#d03840"/><rect x="350" y="458" width="4" height="2" fill="#e87878"/><rect x="354" y="458" width="4" height="2" fill="#d8f0f0"/><rect x="358" y="458" width="2" height="2" fill="#e87878"/><rect x="360" y="458" width="2" height="2" fill="#d03840"/><rect x="362" y="458" width="6" height="2" fill="#480010"/><rect x="368" y="458" width="4" height="2" fill="#d03840"/><rect x="372" y="458" width="2" height="2" fill="#a83838"/><rect x="374" y="458" width="6" height="2" fill="#a84010"/><rect x="380" y="458" width="2" height="2" fill="#4a4a90"/><rect x="382" y="458" width="2" height="2" fill="#585858"/><rect x="328" y="460" width="2" height="2" fill="#0a0a3a"/><rect x="330" y="460" width="10" height="2" fill="#a8a8e0"/><rect x="340" y="460" width="2" height="2" fill="#d03840"/><rect x="342" y="460" width="4" height="2" fill="#480010"/><rect x="346" y="460" width="2" height="2" fill="#d03840"/><rect x="348" y="460" width="6" height="2" fill="#e87878"/><rect x="354" y="460" width="4" height="2" fill="#d8f0f0"/><rect x="358" y="460" width="2" height="2" fill="#e87878"/><rect x="360" y="460" width="2" height="2" fill="#d03840"/><rect x="362" y="460" width="10" height="2" fill="#480010"/><rect x="372" y="460" width="8" height="2" fill="#a83838"/><rect x="380" y="460" width="2" height="2" fill="#4a4a90"/><rect x="382" y="460" width="4" height="2" fill="#585858"/><rect x="328" y="462" width="4" height="2" fill="#0a0a3a"/><rect x="332" y="462" width="8" height="2" fill="#4a4a90"/><rect x="340" y="462" width="2" height="2" fill="#d03840"/><rect x="342" y="462" width="2" height="2" fill="#480010"/><rect x="344" y="462" width="4" height="2" fill="#d03840"/><rect x="348" y="462" width="10" height="2" fill="#e87878"/><rect x="358" y="462" width="2" height="2" fill="#d03840"/><rect x="360" y="462" width="8" height="2" fill="#480010"/><rect x="368" y="462" width="4" height="2" fill="#d03840"/><rect x="372" y="462" width="4" height="2" fill="#401808"/><rect x="376" y="462" width="6" height="2" fill="#a83838"/><rect x="382" y="462" width="4" height="2" fill="#585858"/><rect x="328" y="464" width="2" height="2" fill="#0a0a3a"/><rect x="330" y="464" width="8" height="2" fill="#4a4a90"/><rect x="338" y="464" width="2" height="2" fill="#0a0a3a"/><rect x="340" y="464" width="2" height="2" fill="#d03840"/><rect x="342" y="464" width="2" height="2" fill="#e87878"/><rect x="344" y="464" width="6" height="2" fill="#480010"/><rect x="350" y="464" width="8" height="2" fill="#e87878"/><rect x="358" y="464" width="2" height="2" fill="#d03840"/><rect x="360" y="464" width="6" height="2" fill="#480010"/><rect x="366" y="464" width="6" height="2" fill="#e87878"/><rect x="372" y="464" width="2" height="2" fill="#a83838"/><rect x="374" y="464" width="2" height="2" fill="#401808"/><rect x="376" y="464" width="6" height="2" fill="#a83838"/><rect x="382" y="464" width="4" height="2" fill="#1a5050"/><rect x="328" y="466" width="2" height="2" fill="#d8f0f0"/><rect x="330" y="466" width="10" height="2" fill="#0a0a3a"/><rect x="340" y="466" width="2" height="2" fill="#480010"/><rect x="342" y="466" width="4" height="2" fill="#d03840"/><rect x="346" y="466" width="2" height="2" fill="#480010"/><rect x="348" y="466" width="6" height="2" fill="#d03840"/><rect x="354" y="466" width="2" height="2" fill="#e87878"/><rect x="356" y="466" width="2" height="2" fill="#d03840"/><rect x="358" y="466" width="4" height="2" fill="#480010"/><rect x="362" y="466" width="2" height="2" fill="#e87878"/><rect x="364" y="466" width="4" height="2" fill="#480010"/><rect x="368" y="466" width="4" height="2" fill="#d03840"/><rect x="372" y="466" width="4" height="2" fill="#a84010"/><rect x="376" y="466" width="8" height="2" fill="#a83838"/><rect x="384" y="466" width="2" height="2" fill="#585858"/><rect x="328" y="468" width="12" height="2" fill="#0a0a3a"/><rect x="340" y="468" width="2" height="2" fill="#480010"/><rect x="342" y="468" width="4" height="2" fill="#d03840"/><rect x="346" y="468" width="2" height="2" fill="#480010"/><rect x="348" y="468" width="2" height="2" fill="#d03840"/><rect x="350" y="468" width="2" height="2" fill="#480010"/><rect x="352" y="468" width="2" height="2" fill="#d03840"/><rect x="354" y="468" width="2" height="2" fill="#480010"/><rect x="356" y="468" width="2" height="2" fill="#d03840"/><rect x="358" y="468" width="2" height="2" fill="#480010"/><rect x="360" y="468" width="2" height="2" fill="#d03840"/><rect x="362" y="468" width="2" height="2" fill="#480010"/><rect x="364" y="468" width="2" height="2" fill="#d03840"/><rect x="366" y="468" width="6" height="2" fill="#480010"/><rect x="372" y="468" width="14" height="2" fill="#a84010"/><rect x="274" y="470" width="2" height="2" fill="#585858"/><rect x="276" y="470" width="4" height="2" fill="#a83838"/><rect x="280" y="470" width="4" height="2" fill="#a84010"/><rect x="284" y="470" width="2" height="2" fill="#d0a030"/><rect x="286" y="470" width="2" height="2" fill="#a84010"/><rect x="288" y="470" width="2" height="2" fill="#0a0a3a"/><rect x="290" y="470" width="2" height="2" fill="#d8f0f0"/><rect x="292" y="470" width="2" height="2" fill="#1a5050"/><rect x="294" y="470" width="4" height="2" fill="#0a0a3a"/><rect x="298" y="470" width="2" height="2" fill="#4a4a90"/><rect x="300" y="470" width="2" height="2" fill="#1a5050"/><rect x="302" y="470" width="2" height="2" fill="#2878d0"/><rect x="304" y="470" width="10" height="2" fill="#80b4b4"/><rect x="314" y="470" width="2" height="2" fill="#2878d0"/><rect x="316" y="470" width="4" height="2" fill="#0a0a3a"/><rect x="320" y="470" width="4" height="2" fill="#4a4a90"/><rect x="324" y="470" width="2" height="2" fill="#80b4b4"/><rect x="326" y="470" width="2" height="2" fill="#d8f0f0"/><rect x="274" y="472" width="2" height="2" fill="#585858"/><rect x="276" y="472" width="2" height="2" fill="#a83838"/><rect x="278" y="472" width="4" height="2" fill="#a84010"/><rect x="282" y="472" width="4" height="2" fill="#d0a030"/><rect x="286" y="472" width="2" height="2" fill="#a84010"/><rect x="288" y="472" width="2" height="2" fill="#0a0a3a"/><rect x="290" y="472" width="2" height="2" fill="#1a5050"/><rect x="292" y="472" width="2" height="2" fill="#80b4b4"/><rect x="294" y="472" width="4" height="2" fill="#4a4a90"/><rect x="298" y="472" width="4" height="2" fill="#1a5050"/><rect x="302" y="472" width="16" height="2" fill="#80b4b4"/><rect x="318" y="472" width="2" height="2" fill="#4a4a90"/><rect x="320" y="472" width="2" height="2" fill="#1a5050"/><rect x="322" y="472" width="2" height="2" fill="#80b4b4"/><rect x="324" y="472" width="2" height="2" fill="#1a5050"/><rect x="326" y="472" width="2" height="2" fill="#0a0a3a"/><rect x="274" y="474" width="2" height="2" fill="#585858"/><rect x="276" y="474" width="2" height="2" fill="#a83838"/><rect x="278" y="474" width="4" height="2" fill="#a84010"/><rect x="282" y="474" width="2" height="2" fill="#d0a030"/><rect x="284" y="474" width="2" height="2" fill="#a84010"/><rect x="288" y="474" width="6" height="2" fill="#4a4a90"/><rect x="294" y="474" width="2" height="2" fill="#1a5050"/><rect x="296" y="474" width="6" height="2" fill="#80b4b4"/><rect x="302" y="474" width="2" height="2" fill="#d8f0f0"/><rect x="304" y="474" width="14" height="2" fill="#80b4b4"/><rect x="318" y="474" width="8" height="2" fill="#4a4a90"/><rect x="326" y="474" width="2" height="2" fill="#0a0a3a"/><rect x="272" y="476" width="2" height="2" fill="#1a5050"/><rect x="274" y="476" width="2" height="2" fill="#a83838"/><rect x="276" y="476" width="4" height="2" fill="#a84010"/><rect x="280" y="476" width="2" height="2" fill="#d0a030"/><rect x="282" y="476" width="2" height="2" fill="#a84010"/><rect x="284" y="476" width="2" height="2" fill="#480010"/><rect x="286" y="476" width="6" height="2" fill="#282828"/><rect x="292" y="476" width="2" height="2" fill="#1a5050"/><rect x="294" y="476" width="4" height="2" fill="#0a0a3a"/><rect x="298" y="476" width="4" height="2" fill="#80b4b4"/><rect x="302" y="476" width="2" height="2" fill="#d8f0f0"/><rect x="304" y="476" width="12" height="2" fill="#80b4b4"/><rect x="316" y="476" width="6" height="2" fill="#1a5050"/><rect x="322" y="476" width="6" height="2" fill="#4a4a90"/><rect x="272" y="478" width="2" height="2" fill="#1a5050"/><rect x="274" y="478" width="2" height="2" fill="#a83838"/><rect x="276" y="478" width="8" height="2" fill="#a84010"/><rect x="284" y="478" width="6" height="2" fill="#282828"/><rect x="290" y="478" width="4" height="2" fill="#1a5050"/><rect x="294" y="478" width="4" height="2" fill="#4a4a90"/><rect x="298" y="478" width="4" height="2" fill="#80b4b4"/><rect x="302" y="478" width="10" height="2" fill="#d8f0f0"/><rect x="312" y="478" width="4" height="2" fill="#80b4b4"/><rect x="316" y="478" width="4" height="2" fill="#1a5050"/><rect x="320" y="478" width="8" height="2" fill="#0a0a3a"/><rect x="272" y="480" width="2" height="2" fill="#585858"/><rect x="274" y="480" width="2" height="2" fill="#a83838"/><rect x="276" y="480" width="4" height="2" fill="#a84010"/><rect x="280" y="480" width="2" height="2" fill="#d0a030"/><rect x="282" y="480" width="2" height="2" fill="#a84010"/><rect x="284" y="480" width="6" height="2" fill="#282828"/><rect x="290" y="480" width="4" height="2" fill="#0a0a3a"/><rect x="294" y="480" width="2" height="2" fill="#4a4a90"/><rect x="296" y="480" width="4" height="2" fill="#1a5050"/><rect x="300" y="480" width="2" height="2" fill="#80b4b4"/><rect x="302" y="480" width="12" height="2" fill="#d03840"/><rect x="314" y="480" width="2" height="2" fill="#80b4b4"/><rect x="316" y="480" width="4" height="2" fill="#1a5050"/><rect x="320" y="480" width="8" height="2" fill="#0a0a3a"/><rect x="272" y="482" width="2" height="2" fill="#585858"/><rect x="274" y="482" width="2" height="2" fill="#a83838"/><rect x="276" y="482" width="8" height="2" fill="#a84010"/><rect x="284" y="482" width="2" height="2" fill="#480010"/><rect x="286" y="482" width="4" height="2" fill="#282828"/><rect x="290" y="482" width="4" height="2" fill="#0a0a3a"/><rect x="294" y="482" width="4" height="2" fill="#1a5050"/><rect x="298" y="482" width="4" height="2" fill="#80b4b4"/><rect x="302" y="482" width="12" height="2" fill="#d03840"/><rect x="314" y="482" width="2" height="2" fill="#80b4b4"/><rect x="316" y="482" width="4" height="2" fill="#1a5050"/><rect x="320" y="482" width="8" height="2" fill="#0a0a3a"/><rect x="272" y="484" width="2" height="2" fill="#585858"/><rect x="274" y="484" width="2" height="2" fill="#1a5050"/><rect x="276" y="484" width="4" height="2" fill="#a83838"/><rect x="280" y="484" width="8" height="2" fill="#a84010"/><rect x="288" y="484" width="6" height="2" fill="#282828"/><rect x="294" y="484" width="4" height="2" fill="#0a0a3a"/><rect x="298" y="484" width="4" height="2" fill="#80b4b4"/><rect x="302" y="484" width="2" height="2" fill="#d03840"/><rect x="304" y="484" width="2" height="2" fill="#d8f0f0"/><rect x="306" y="484" width="2" height="2" fill="#d03840"/><rect x="308" y="484" width="2" height="2" fill="#d8f0f0"/><rect x="310" y="484" width="4" height="2" fill="#d03840"/><rect x="314" y="484" width="2" height="2" fill="#80b4b4"/><rect x="316" y="484" width="2" height="2" fill="#1a5050"/><rect x="318" y="484" width="4" height="2" fill="#0a0a3a"/><rect x="322" y="484" width="2" height="2" fill="#a84010"/><rect x="324" y="484" width="4" height="2" fill="#d0a030"/><rect x="272" y="486" width="4" height="2" fill="#585858"/><rect x="276" y="486" width="6" height="2" fill="#a83838"/><rect x="282" y="486" width="6" height="2" fill="#a84010"/><rect x="288" y="486" width="2" height="2" fill="#401808"/><rect x="290" y="486" width="6" height="2" fill="#282828"/><rect x="296" y="486" width="2" height="2" fill="#480010"/><rect x="298" y="486" width="4" height="2" fill="#80b4b4"/><rect x="302" y="486" width="2" height="2" fill="#d8f0f0"/><rect x="304" y="486" width="2" height="2" fill="#d03840"/><rect x="306" y="486" width="2" height="2" fill="#d8f0f0"/><rect x="308" y="486" width="6" height="2" fill="#80b4b4"/><rect x="314" y="486" width="2" height="2" fill="#1a5050"/><rect x="316" y="486" width="2" height="2" fill="#a84010"/><rect x="318" y="486" width="4" height="2" fill="#d0a030"/><rect x="322" y="486" width="6" height="2" fill="#a84010"/><rect x="274" y="488" width="2" height="2" fill="#585858"/><rect x="276" y="488" width="2" height="2" fill="#1a5050"/><rect x="278" y="488" width="4" height="2" fill="#a83838"/><rect x="282" y="488" width="6" height="2" fill="#a84010"/><rect x="288" y="488" width="4" height="2" fill="#401808"/><rect x="292" y="488" width="6" height="2" fill="#282828"/><rect x="298" y="488" width="2" height="2" fill="#480010"/><rect x="300" y="488" width="2" height="2" fill="#80b4b4"/><rect x="302" y="488" width="2" height="2" fill="#d8f0f0"/><rect x="304" y="488" width="2" height="2" fill="#80b4b4"/><rect x="306" y="488" width="2" height="2" fill="#d8f0f0"/><rect x="308" y="488" width="2" height="2" fill="#80b4b4"/><rect x="310" y="488" width="2" height="2" fill="#d8f0f0"/><rect x="312" y="488" width="2" height="2" fill="#80b4b4"/><rect x="314" y="488" width="2" height="2" fill="#1a5050"/><rect x="316" y="488" width="6" height="2" fill="#a84010"/><rect x="322" y="488" width="6" height="2" fill="#401808"/><rect x="278" y="490" width="2" height="2" fill="#585858"/><rect x="280" y="490" width="4" height="2" fill="#a83838"/><rect x="284" y="490" width="6" height="2" fill="#a84010"/><rect x="290" y="490" width="10" height="2" fill="#f0c890"/><rect x="300" y="490" width="2" height="2" fill="#1a5050"/><rect x="302" y="490" width="2" height="2" fill="#80b4b4"/><rect x="304" y="490" width="2" height="2" fill="#1a5050"/><rect x="306" y="490" width="2" height="2" fill="#80b4b4"/><rect x="308" y="490" width="2" height="2" fill="#1a5050"/><rect x="310" y="490" width="2" height="2" fill="#80b4b4"/><rect x="312" y="490" width="2" height="2" fill="#a84010"/><rect x="314" y="490" width="2" height="2" fill="#401808"/><rect x="316" y="490" width="6" height="2" fill="#f0c890"/><rect x="322" y="490" width="4" height="2" fill="#401808"/><rect x="278" y="492" width="4" height="2" fill="#4a4a90"/><rect x="282" y="492" width="8" height="2" fill="#a83838"/><rect x="290" y="492" width="14" height="2" fill="#a84010"/><rect x="304" y="492" width="10" height="2" fill="#1a5050"/><rect x="314" y="492" width="2" height="2" fill="#401808"/><rect x="316" y="492" width="2" height="2" fill="#1a5050"/><rect x="318" y="492" width="6" height="2" fill="#f0c890"/><rect x="324" y="492" width="2" height="2" fill="#a84010"/><rect x="326" y="492" width="2" height="2" fill="#a83838"/><rect x="280" y="494" width="4" height="2" fill="#4a4a90"/><rect x="284" y="494" width="4" height="2" fill="#585858"/><rect x="288" y="494" width="4" height="2" fill="#a83838"/><rect x="292" y="494" width="12" height="2" fill="#a84010"/><rect x="304" y="494" width="4" height="2" fill="#a83838"/><rect x="308" y="494" width="10" height="2" fill="#480010"/><rect x="318" y="494" width="6" height="2" fill="#f0c890"/><rect x="324" y="494" width="2" height="2" fill="#401808"/><rect x="326" y="494" width="2" height="2" fill="#d0a030"/><rect x="284" y="496" width="4" height="2" fill="#585858"/><rect x="288" y="496" width="2" height="2" fill="#1a5050"/><rect x="290" y="496" width="4" height="2" fill="#585858"/><rect x="294" y="496" width="4" height="2" fill="#a83838"/><rect x="298" y="496" width="6" height="2" fill="#a84010"/><rect x="304" y="496" width="2" height="2" fill="#a83838"/><rect x="306" y="496" width="2" height="2" fill="#585858"/><rect x="308" y="496" width="10" height="2" fill="#480010"/><rect x="318" y="496" width="6" height="2" fill="#f0c890"/><rect x="324" y="496" width="2" height="2" fill="#a83838"/><rect x="326" y="496" width="2" height="2" fill="#401808"/><rect x="286" y="498" width="4" height="2" fill="#1a5050"/><rect x="290" y="498" width="4" height="2" fill="#585858"/><rect x="294" y="498" width="10" height="2" fill="#a83838"/><rect x="304" y="498" width="2" height="2" fill="#4a4a90"/><rect x="306" y="498" width="2" height="2" fill="#1a5050"/><rect x="308" y="498" width="4" height="2" fill="#a84010"/><rect x="312" y="498" width="2" height="2" fill="#1a5050"/><rect x="314" y="498" width="6" height="2" fill="#480010"/><rect x="320" y="498" width="4" height="2" fill="#f0c890"/><rect x="324" y="498" width="2" height="2" fill="#4a4a90"/><rect x="326" y="498" width="2" height="2" fill="#401808"/><rect x="294" y="500" width="4" height="2" fill="#585858"/><rect x="298" y="500" width="2" height="2" fill="#4a4a90"/><rect x="302" y="500" width="4" height="2" fill="#4a4a90"/><rect x="306" y="500" width="4" height="2" fill="#480010"/><rect x="310" y="500" width="4" height="2" fill="#401808"/><rect x="314" y="500" width="2" height="2" fill="#1a5050"/><rect x="316" y="500" width="6" height="2" fill="#401808"/><rect x="322" y="500" width="4" height="2" fill="#f0c890"/><rect x="326" y="500" width="2" height="2" fill="#401808"/><rect x="298" y="502" width="2" height="2" fill="#4a4a90"/><rect x="300" y="502" width="6" height="2" fill="#585858"/><rect x="306" y="502" width="4" height="2" fill="#4a4a90"/><rect x="310" y="502" width="4" height="2" fill="#401808"/><rect x="314" y="502" width="2" height="2" fill="#1a5050"/><rect x="316" y="502" width="6" height="2" fill="#480010"/><rect x="322" y="502" width="2" height="2" fill="#1a5050"/><rect x="324" y="502" width="2" height="2" fill="#401808"/><rect x="326" y="502" width="2" height="2" fill="#a83838"/><rect x="300" y="504" width="4" height="2" fill="#1a5050"/><rect x="304" y="504" width="2" height="2" fill="#585858"/><rect x="306" y="504" width="10" height="2" fill="#401808"/><rect x="316" y="504" width="4" height="2" fill="#480010"/><rect x="320" y="504" width="8" height="2" fill="#401808"/><rect x="304" y="506" width="2" height="2" fill="#585858"/><rect x="306" y="506" width="2" height="2" fill="#4a4a90"/><rect x="308" y="506" width="20" height="2" fill="#401808"/><rect x="328" y="470" width="2" height="2" fill="#1a5050"/><rect x="330" y="470" width="2" height="2" fill="#0a0a3a"/><rect x="332" y="470" width="6" height="2" fill="#4a4a90"/><rect x="338" y="470" width="2" height="2" fill="#0a0a3a"/><rect x="340" y="470" width="4" height="2" fill="#480010"/><rect x="344" y="470" width="2" height="2" fill="#d03840"/><rect x="346" y="470" width="4" height="2" fill="#e87878"/><rect x="350" y="470" width="2" height="2" fill="#d03840"/><rect x="352" y="470" width="8" height="2" fill="#e87878"/><rect x="360" y="470" width="4" height="2" fill="#d03840"/><rect x="364" y="470" width="4" height="2" fill="#e87878"/><rect x="368" y="470" width="4" height="2" fill="#480010"/><rect x="372" y="470" width="2" height="2" fill="#401808"/><rect x="374" y="470" width="12" height="2" fill="#a84010"/><rect x="328" y="472" width="2" height="2" fill="#0a0a3a"/><rect x="330" y="472" width="8" height="2" fill="#4a4a90"/><rect x="338" y="472" width="2" height="2" fill="#0a0a3a"/><rect x="340" y="472" width="4" height="2" fill="#480010"/><rect x="344" y="472" width="4" height="2" fill="#d03840"/><rect x="350" y="472" width="2" height="2" fill="#2878d0"/><rect x="352" y="472" width="4" height="2" fill="#480010"/><rect x="356" y="472" width="2" height="2" fill="#e87878"/><rect x="358" y="472" width="2" height="2" fill="#d03840"/><rect x="360" y="472" width="2" height="2" fill="#480010"/><rect x="362" y="472" width="2" height="2" fill="#2878d0"/><rect x="364" y="472" width="4" height="2" fill="#d03840"/><rect x="368" y="472" width="4" height="2" fill="#480010"/><rect x="372" y="472" width="6" height="2" fill="#a84010"/><rect x="378" y="472" width="8" height="2" fill="#a83838"/><rect x="328" y="474" width="2" height="2" fill="#0a0a3a"/><rect x="330" y="474" width="8" height="2" fill="#4a4a90"/><rect x="338" y="474" width="2" height="2" fill="#0a0a3a"/><rect x="340" y="474" width="2" height="2" fill="#d03840"/><rect x="342" y="474" width="2" height="2" fill="#480010"/><rect x="344" y="474" width="2" height="2" fill="#e87878"/><rect x="346" y="474" width="2" height="2" fill="#d03840"/><rect x="348" y="474" width="4" height="2" fill="#480010"/><rect x="352" y="474" width="4" height="2" fill="#d03840"/><rect x="356" y="474" width="2" height="2" fill="#e87878"/><rect x="358" y="474" width="4" height="2" fill="#480010"/><rect x="362" y="474" width="2" height="2" fill="#d03840"/><rect x="364" y="474" width="2" height="2" fill="#e87878"/><rect x="366" y="474" width="4" height="2" fill="#480010"/><rect x="370" y="474" width="2" height="2" fill="#d03840"/><rect x="372" y="474" width="8" height="2" fill="#a83838"/><rect x="380" y="474" width="4" height="2" fill="#4a4a90"/><rect x="384" y="474" width="2" height="2" fill="#585858"/><rect x="328" y="476" width="2" height="2" fill="#0a0a3a"/><rect x="330" y="476" width="4" height="2" fill="#4a4a90"/><rect x="334" y="476" width="6" height="2" fill="#0a0a3a"/><rect x="340" y="476" width="2" height="2" fill="#d03840"/><rect x="342" y="476" width="2" height="2" fill="#480010"/><rect x="344" y="476" width="6" height="2" fill="#d03840"/><rect x="350" y="476" width="4" height="2" fill="#480010"/><rect x="354" y="476" width="6" height="2" fill="#d03840"/><rect x="360" y="476" width="2" height="2" fill="#480010"/><rect x="362" y="476" width="4" height="2" fill="#d03840"/><rect x="366" y="476" width="2" height="2" fill="#480010"/><rect x="368" y="476" width="2" height="2" fill="#d03840"/><rect x="370" y="476" width="2" height="2" fill="#a83838"/><rect x="372" y="476" width="2" height="2" fill="#4a4a90"/><rect x="374" y="476" width="4" height="2" fill="#a83838"/><rect x="378" y="476" width="2" height="2" fill="#4a4a90"/><rect x="380" y="476" width="2" height="2" fill="#585858"/><rect x="382" y="476" width="2" height="2" fill="#1a5050"/><rect x="384" y="476" width="2" height="2" fill="#585858"/><rect x="328" y="478" width="14" height="2" fill="#0a0a3a"/><rect x="342" y="478" width="4" height="2" fill="#480010"/><rect x="350" y="478" width="2" height="2" fill="#d03840"/><rect x="352" y="478" width="2" height="2" fill="#e87878"/><rect x="354" y="478" width="2" height="2" fill="#d03840"/><rect x="356" y="478" width="2" height="2" fill="#e87878"/><rect x="358" y="478" width="2" height="2" fill="#d03840"/><rect x="364" y="478" width="4" height="2" fill="#480010"/><rect x="368" y="478" width="6" height="2" fill="#a84010"/><rect x="374" y="478" width="2" height="2" fill="#a83838"/><rect x="376" y="478" width="2" height="2" fill="#4a4a90"/><rect x="378" y="478" width="6" height="2" fill="#585858"/><rect x="330" y="480" width="12" height="2" fill="#0a0a3a"/><rect x="342" y="480" width="4" height="2" fill="#480010"/><rect x="350" y="480" width="2" height="2" fill="#d03840"/><rect x="352" y="480" width="4" height="2" fill="#e87878"/><rect x="356" y="480" width="2" height="2" fill="#d03840"/><rect x="358" y="480" width="2" height="2" fill="#e87878"/><rect x="364" y="480" width="2" height="2" fill="#480010"/><rect x="366" y="480" width="2" height="2" fill="#d03840"/><rect x="368" y="480" width="4" height="2" fill="#a84010"/><rect x="372" y="480" width="2" height="2" fill="#a83838"/><rect x="374" y="480" width="4" height="2" fill="#585858"/><rect x="328" y="482" width="8" height="2" fill="#0a0a3a"/><rect x="336" y="482" width="6" height="2" fill="#4a4a90"/><rect x="342" y="482" width="2" height="2" fill="#480010"/><rect x="344" y="482" width="2" height="2" fill="#d03840"/><rect x="350" y="482" width="2" height="2" fill="#480010"/><rect x="352" y="482" width="8" height="2" fill="#d03840"/><rect x="364" y="482" width="2" height="2" fill="#480010"/><rect x="366" y="482" width="2" height="2" fill="#d03840"/><rect x="368" y="482" width="6" height="2" fill="#a83838"/><rect x="374" y="482" width="2" height="2" fill="#4a4a90"/><rect x="376" y="482" width="2" height="2" fill="#585858"/><rect x="378" y="482" width="2" height="2" fill="#1a5050"/><rect x="328" y="484" width="14" height="2" fill="#0a0a3a"/><rect x="342" y="484" width="2" height="2" fill="#480010"/><rect x="344" y="484" width="2" height="2" fill="#d03840"/><rect x="346" y="484" width="2" height="2" fill="#480010"/><rect x="362" y="484" width="4" height="2" fill="#480010"/><rect x="366" y="484" width="2" height="2" fill="#d03840"/><rect x="368" y="484" width="6" height="2" fill="#a83838"/><rect x="374" y="484" width="2" height="2" fill="#4a4a90"/><rect x="376" y="484" width="2" height="2" fill="#585858"/><rect x="378" y="484" width="2" height="2" fill="#1a5050"/><rect x="328" y="486" width="2" height="2" fill="#401808"/><rect x="330" y="486" width="12" height="2" fill="#a84010"/><rect x="342" y="486" width="4" height="2" fill="#480010"/><rect x="346" y="486" width="2" height="2" fill="#d03840"/><rect x="348" y="486" width="14" height="2" fill="#e87878"/><rect x="362" y="486" width="2" height="2" fill="#d03840"/><rect x="364" y="486" width="2" height="2" fill="#480010"/><rect x="366" y="486" width="2" height="2" fill="#401808"/><rect x="368" y="486" width="6" height="2" fill="#a83838"/><rect x="374" y="486" width="2" height="2" fill="#4a4a90"/><rect x="376" y="486" width="2" height="2" fill="#585858"/><rect x="378" y="486" width="2" height="2" fill="#1a5050"/><rect x="328" y="488" width="8" height="2" fill="#d0a030"/><rect x="336" y="488" width="2" height="2" fill="#a84010"/><rect x="338" y="488" width="4" height="2" fill="#d0a030"/><rect x="342" y="488" width="2" height="2" fill="#a84010"/><rect x="344" y="488" width="2" height="2" fill="#401808"/><rect x="346" y="488" width="14" height="2" fill="#480010"/><rect x="360" y="488" width="2" height="2" fill="#d03840"/><rect x="362" y="488" width="2" height="2" fill="#401808"/><rect x="364" y="488" width="4" height="2" fill="#a84010"/><rect x="368" y="488" width="6" height="2" fill="#a83838"/><rect x="374" y="488" width="2" height="2" fill="#585858"/><rect x="376" y="488" width="2" height="2" fill="#1a5050"/><rect x="328" y="490" width="2" height="2" fill="#a84010"/><rect x="330" y="490" width="2" height="2" fill="#d0a030"/><rect x="332" y="490" width="2" height="2" fill="#a84010"/><rect x="334" y="490" width="4" height="2" fill="#d0a030"/><rect x="338" y="490" width="2" height="2" fill="#a84010"/><rect x="340" y="490" width="2" height="2" fill="#d0a030"/><rect x="342" y="490" width="6" height="2" fill="#a84010"/><rect x="348" y="490" width="6" height="2" fill="#401808"/><rect x="354" y="490" width="2" height="2" fill="#480010"/><rect x="356" y="490" width="2" height="2" fill="#f0c890"/><rect x="358" y="490" width="6" height="2" fill="#401808"/><rect x="364" y="490" width="8" height="2" fill="#a84010"/><rect x="372" y="490" width="2" height="2" fill="#a83838"/><rect x="374" y="490" width="2" height="2" fill="#585858"/><rect x="376" y="490" width="2" height="2" fill="#1a5050"/><rect x="328" y="492" width="2" height="2" fill="#d0a030"/><rect x="330" y="492" width="4" height="2" fill="#a84010"/><rect x="334" y="492" width="2" height="2" fill="#d0a030"/><rect x="336" y="492" width="2" height="2" fill="#a84010"/><rect x="338" y="492" width="2" height="2" fill="#d0a030"/><rect x="340" y="492" width="2" height="2" fill="#a84010"/><rect x="342" y="492" width="4" height="2" fill="#d0a030"/><rect x="346" y="492" width="2" height="2" fill="#401808"/><rect x="348" y="492" width="2" height="2" fill="#a84010"/><rect x="350" y="492" width="2" height="2" fill="#401808"/><rect x="352" y="492" width="6" height="2" fill="#f0c890"/><rect x="358" y="492" width="6" height="2" fill="#401808"/><rect x="364" y="492" width="4" height="2" fill="#a84010"/><rect x="368" y="492" width="2" height="2" fill="#d0a030"/><rect x="370" y="492" width="2" height="2" fill="#a83838"/><rect x="372" y="492" width="2" height="2" fill="#585858"/><rect x="328" y="494" width="2" height="2" fill="#d0a030"/><rect x="330" y="494" width="2" height="2" fill="#a83838"/><rect x="332" y="494" width="4" height="2" fill="#d0a030"/><rect x="336" y="494" width="2" height="2" fill="#a84010"/><rect x="338" y="494" width="2" height="2" fill="#d0a030"/><rect x="340" y="494" width="2" height="2" fill="#a84010"/><rect x="342" y="494" width="2" height="2" fill="#d0a030"/><rect x="344" y="494" width="4" height="2" fill="#a84010"/><rect x="348" y="494" width="2" height="2" fill="#401808"/><rect x="350" y="494" width="4" height="2" fill="#f0c890"/><rect x="354" y="494" width="2" height="2" fill="#401808"/><rect x="356" y="494" width="8" height="2" fill="#480010"/><rect x="364" y="494" width="2" height="2" fill="#401808"/><rect x="366" y="494" width="4" height="2" fill="#a84010"/><rect x="370" y="494" width="4" height="2" fill="#a83838"/><rect x="374" y="494" width="2" height="2" fill="#585858"/><rect x="376" y="494" width="2" height="2" fill="#1a5050"/><rect x="328" y="496" width="6" height="2" fill="#2878d0"/><rect x="334" y="496" width="6" height="2" fill="#a83838"/><rect x="340" y="496" width="8" height="2" fill="#2878d0"/><rect x="348" y="496" width="2" height="2" fill="#a83838"/><rect x="350" y="496" width="4" height="2" fill="#f0c890"/><rect x="354" y="496" width="8" height="2" fill="#480010"/><rect x="362" y="496" width="4" height="2" fill="#a84010"/><rect x="366" y="496" width="6" height="2" fill="#a83838"/><rect x="372" y="496" width="2" height="2" fill="#585858"/><rect x="374" y="496" width="2" height="2" fill="#1a5050"/><rect x="328" y="498" width="6" height="2" fill="#f0c890"/><rect x="334" y="498" width="2" height="2" fill="#a84010"/><rect x="336" y="498" width="10" height="2" fill="#f0c890"/><rect x="346" y="498" width="2" height="2" fill="#a84010"/><rect x="348" y="498" width="2" height="2" fill="#d03840"/><rect x="350" y="498" width="2" height="2" fill="#f0c890"/><rect x="352" y="498" width="8" height="2" fill="#480010"/><rect x="360" y="498" width="2" height="2" fill="#401808"/><rect x="362" y="498" width="2" height="2" fill="#a84010"/><rect x="364" y="498" width="6" height="2" fill="#a83838"/><rect x="370" y="498" width="2" height="2" fill="#585858"/><rect x="328" y="500" width="6" height="2" fill="#f0c890"/><rect x="334" y="500" width="2" height="2" fill="#a84010"/><rect x="336" y="500" width="2" height="2" fill="#f0c890"/><rect x="338" y="500" width="2" height="2" fill="#a84010"/><rect x="340" y="500" width="8" height="2" fill="#f0c890"/><rect x="348" y="500" width="2" height="2" fill="#a83838"/><rect x="350" y="500" width="2" height="2" fill="#f0c890"/><rect x="352" y="500" width="2" height="2" fill="#480010"/><rect x="354" y="500" width="2" height="2" fill="#1a5050"/><rect x="356" y="500" width="2" height="2" fill="#401808"/><rect x="358" y="500" width="2" height="2" fill="#a84010"/><rect x="360" y="500" width="2" height="2" fill="#401808"/><rect x="362" y="500" width="4" height="2" fill="#480010"/><rect x="366" y="500" width="4" height="2" fill="#a83838"/><rect x="370" y="500" width="2" height="2" fill="#585858"/><rect x="328" y="502" width="20" height="2" fill="#f0c890"/><rect x="348" y="502" width="2" height="2" fill="#a83838"/><rect x="350" y="502" width="2" height="2" fill="#401808"/><rect x="352" y="502" width="2" height="2" fill="#480010"/><rect x="354" y="502" width="10" height="2" fill="#401808"/><rect x="364" y="502" width="2" height="2" fill="#a84010"/><rect x="366" y="502" width="4" height="2" fill="#a83838"/><rect x="370" y="502" width="2" height="2" fill="#4a4a90"/><rect x="372" y="502" width="2" height="2" fill="#585858"/><rect x="328" y="504" width="6" height="2" fill="#f0c890"/><rect x="334" y="504" width="2" height="2" fill="#480010"/><rect x="336" y="504" width="2" height="2" fill="#d8f0f0"/><rect x="338" y="504" width="2" height="2" fill="#480010"/><rect x="340" y="504" width="2" height="2" fill="#d8f0f0"/><rect x="342" y="504" width="2" height="2" fill="#480010"/><rect x="344" y="504" width="4" height="2" fill="#f0c890"/><rect x="348" y="504" width="2" height="2" fill="#401808"/><rect x="350" y="504" width="2" height="2" fill="#1a5050"/><rect x="352" y="504" width="2" height="2" fill="#401808"/><rect x="354" y="504" width="2" height="2" fill="#480010"/><rect x="356" y="504" width="6" height="2" fill="#401808"/><rect x="362" y="504" width="6" height="2" fill="#a83838"/><rect x="368" y="504" width="2" height="2" fill="#585858"/><rect x="370" y="504" width="2" height="2" fill="#1a5050"/><rect x="328" y="506" width="6" height="2" fill="#f0c890"/><rect x="334" y="506" width="2" height="2" fill="#a83838"/><rect x="336" y="506" width="6" height="2" fill="#d03840"/><rect x="342" y="506" width="2" height="2" fill="#a83838"/><rect x="344" y="506" width="4" height="2" fill="#f0c890"/><rect x="348" y="506" width="14" height="2" fill="#401808"/><rect x="362" y="506" width="4" height="2" fill="#a83838"/><rect x="366" y="506" width="2" height="2" fill="#1a5050"/><rect x="368" y="506" width="2" height="2" fill="#585858"/><rect x="370" y="506" width="2" height="2" fill="#1a5050"/></svg></div>
<div class="t tr" style="right:270px;top:356px">X:</div>
<div class="ed" style="left:582px;top:350px;width:32px;height:21px"></div><div class="t" style="left:586px;top:354px">0</div>
<div class="t tr" style="right:270px;top:388px">Y:</div>
<div class="ed" style="left:582px;top:382px;width:32px;height:21px"></div><div class="t" style="left:586px;top:386px">0</div>
<div class="t tr" style="right:269px;top:419px">W:</div>
<div class="ed" style="left:582px;top:414px;width:32px;height:21px"></div><div class="t" style="left:586px;top:418px">120</div>
<div class="t tr" style="right:270px;top:451px">H:</div>
<div class="ed" style="left:582px;top:446px;width:32px;height:21px"></div><div class="t" style="left:586px;top:450px">102</div>
<div class="t tr" style="right:261px;top:483px">Tran :</div>
<div class="ed" style="left:582px;top:478px;width:32px;height:21px"></div><div class="t" style="left:586px;top:482px">220</div>
<div class="grp" style="left:630px;top:336px;width:152px;height:180px"></div><div class="gl" style="left:638px;top:331px">Type...</div>
<div class="rad" style="left:647px;top:356px"></div><div class="t" style="left:665px;top:356px">Sort à cible unique</div>
<div class="rad" style="left:647px;top:372px"></div><div class="t" style="left:665px;top:372px">Boule de feu</div>
<div class="rad on" style="left:647px;top:388px"></div><div class="t" style="left:665px;top:388px">Sort à Effet de zone</div>
<div class="rad" style="left:647px;top:404px"></div><div class="t" style="left:665px;top:404px">Téléportation</div>
<div class="rad" style="left:647px;top:420px"></div><div class="t" style="left:665px;top:420px">Résurrection</div>
<div class="rad" style="left:647px;top:436px"></div><div class="t" style="left:665px;top:436px">Saut d'attaque</div>
<div class="rad" style="left:647px;top:452px"></div><div class="t" style="left:665px;top:452px">Attaque sournoise</div>
<div class="grp" style="left:198px;top:529px;width:232px;height:67px"></div><div class="gl" style="left:206px;top:525px">Cible par défaut</div>
<div class="rad on" style="left:207px;top:538px"></div><div class="t" style="left:225px;top:538px">Cible Monstre</div>
<div class="rad" style="left:207px;top:552px"></div><div class="t" style="left:225px;top:552px">Cible Joueur</div>
<div class="rad" style="left:207px;top:566px"></div><div class="t" style="left:225px;top:566px">Cible soi meme benefique</div>
<div class="rad" style="left:207px;top:580px"></div><div class="t" style="left:225px;top:580px">Cible autour du joueur</div>
<div class="grp" style="left:438px;top:529px;width:232px;height:67px"></div><div class="gl" style="left:445px;top:525px">Utilisable par</div>
<div class="ed" style="left:446px;top:548px;width:216px;height:21px"></div><div class="t" style="left:450px;top:552px">Toutes les classes</div>
<div class="btn" style="left:644px;top:550px;width:17px;height:17px"><svg width="15" height="15" style="position:absolute;left:0;top:0" shape-rendering="crispEdges"><path d="M4 6h7v1h-1v1h-1v1h-1v1h-1v-1h-1v-1h-1v-1h-1z" fill="#000"/></svg></div>
<!--/MAIN-->
<div class="a" style="left:0;top:0;width:838px;height:1px;background:linear-gradient(90deg,#2d1a1a 0,#2d1a1a 40px,#6a5a30 45px,#6a5a30 65px,#5a2a20 70px,#5a2a20 85px,#707070 86px,#707070 124px,#1b3060 125px,#1b3060 100%)"></div>
<div class="a" style="left:0;top:0;width:1px;height:684px;background:linear-gradient(180deg,#2d1a1a 0,#3a1c1c 130px,#707070 260px,#6c6c6c 100%)"></div>
<div class="a" style="left:837px;top:0;width:1px;height:684px;background:#1b2b50"></div>
<div class="a" style="left:0;top:683px;width:838px;height:1px;background:#1b2b50"></div>
</body></html>
